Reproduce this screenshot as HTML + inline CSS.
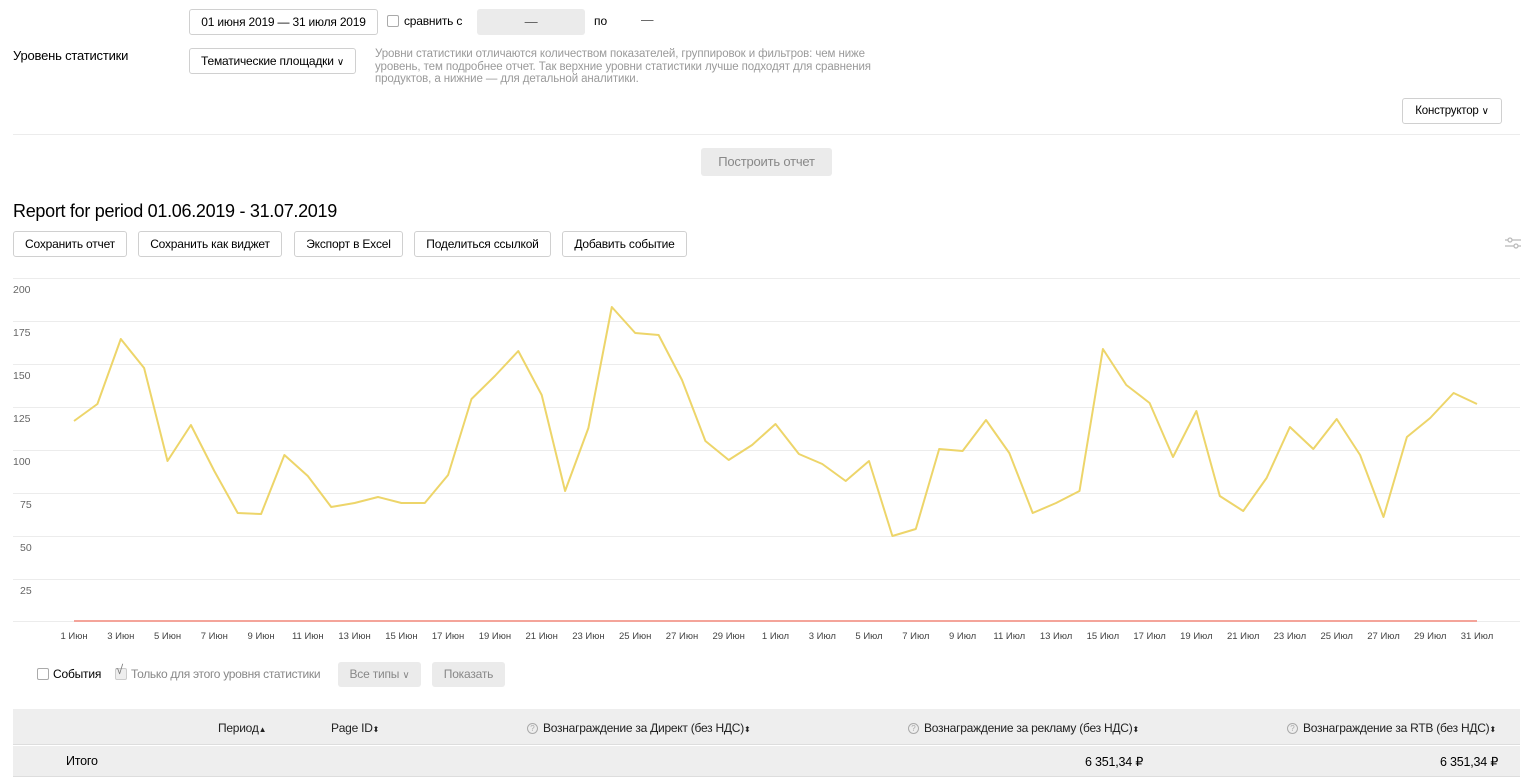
<!DOCTYPE html>
<html><head><meta charset="utf-8"><style>
*{box-sizing:border-box}
body{margin:0;width:1538px;height:779px;overflow:hidden;background:#fff;font-family:"Liberation Sans",sans-serif;font-size:13px;color:#000;position:relative}
.a{position:absolute}
.btn{position:absolute;border:1px solid #d0d0d0;border-radius:3px;background:#fff;height:26px;line-height:24px;font-size:12px;letter-spacing:-0.2px;white-space:nowrap;text-align:center}
.gbtn{position:absolute;background:#ebebeb;border-radius:3px;color:#888;text-align:center;letter-spacing:-0.2px}
.cb{position:absolute;width:12px;height:12px;border:1px solid #aaa;border-radius:2px;background:#fff}
.th{position:absolute;top:721px;font-size:12px;letter-spacing:-0.25px;color:#222}
.q{display:inline-block;width:11px;height:11px;border:1px solid #aaa;border-radius:50%;font-size:8px;line-height:9px;text-align:center;color:#aaa;margin-right:5px;vertical-align:1px;letter-spacing:0}
</style></head><body>
<div class="btn" style="left:189px;top:9px;width:189px">01 июня 2019 — 31 июля 2019</div>
<div class="cb" style="left:387px;top:15px"></div>
<div class="a" style="left:404px;top:14px;font-size:12px;letter-spacing:-0.2px">сравнить с</div>
<div class="gbtn" style="left:477px;top:9px;width:108px;height:26px;line-height:26px;color:#555">—</div>
<div class="a" style="left:594px;top:14px;font-size:12px">по</div>
<div class="a" style="left:641px;top:13px;font-size:12.5px;color:#555">—</div>
<div class="a" style="left:13px;top:48px;font-size:13px;letter-spacing:-0.2px">Уровень статистики</div>
<div class="btn" style="left:189px;top:48px;width:167px">Тематические площадки <span style="font-size:10px">&#8744;</span></div>
<div class="a" style="left:375px;top:48px;width:520px;font-size:11.5px;line-height:12.5px;color:#9a9a9a;letter-spacing:-0.1px">Уровни статистики отличаются количеством показателей, группировок и фильтров: чем ниже уровень, тем подробнее отчет. Так верхние уровни статистики лучше подходят для сравнения продуктов, а нижние — для детальной аналитики.</div>
<div class="btn" style="left:1402px;top:98px;width:100px;font-size:11.5px">Конструктор <span style="font-size:10px">&#8744;</span></div>
<div class="a" style="left:13px;top:134px;width:1507px;height:1px;background:#ececec"></div>
<div class="gbtn" style="left:701px;top:148px;width:131px;height:28px;line-height:28px;font-size:13px">Построить отчет</div>
<div class="a" style="left:13px;top:201px;font-size:18px;letter-spacing:-0.3px">Report for period 01.06.2019 - 31.07.2019</div>
<div class="btn" style="left:13px;top:231px;width:114px">Сохранить отчет</div>
<div class="btn" style="left:138px;top:231px;width:144px">Сохранить как виджет</div>
<div class="btn" style="left:294px;top:231px;width:109px">Экспорт в Excel</div>
<div class="btn" style="left:414px;top:231px;width:137px">Поделиться ссылкой</div>
<div class="btn" style="left:562px;top:231px;width:125px">Добавить событие</div>
<svg class="a" style="left:1505px;top:236px" width="16" height="14"><g stroke="#bbb" stroke-width="1.3" fill="none"><line x1="0" y1="4" x2="16" y2="4"/><line x1="0" y1="10" x2="16" y2="10"/><circle cx="5" cy="4" r="2" fill="#fff"/><circle cx="11" cy="10" r="2" fill="#fff"/></g></svg>
<svg class="a" style="left:0;top:270px" width="1538" height="380" font-family="Liberation Sans" font-size="10.5" fill="#666">
<g stroke="#ececec" stroke-width="1">
<line x1="13" y1="8.5" x2="1520" y2="8.5"/><line x1="13" y1="51.5" x2="1520" y2="51.5"/><line x1="13" y1="94.5" x2="1520" y2="94.5"/><line x1="13" y1="137.5" x2="1520" y2="137.5"/><line x1="13" y1="180.5" x2="1520" y2="180.5"/><line x1="13" y1="223.5" x2="1520" y2="223.5"/><line x1="13" y1="266.5" x2="1520" y2="266.5"/><line x1="13" y1="309.5" x2="1520" y2="309.5"/><line x1="13" y1="351.5" x2="1520" y2="351.5"/>
</g>
<g><text x="13" y="23">200</text><text x="13" y="66">175</text><text x="13" y="109">150</text><text x="13" y="152">125</text><text x="13" y="195">100</text><text x="20" y="238">75</text><text x="20" y="281">50</text><text x="20" y="324">25</text></g>
<line x1="74" y1="351" x2="1477" y2="351" stroke="#f4a49a" stroke-width="2"/>
<polyline fill="none" stroke="#edd56a" stroke-width="2" stroke-linejoin="round" points="
74,151 97.4,134 120.8,69 144.1,98 167.5,191 190.9,155 214.3,201 237.7,243 261.1,244 284.4,185 307.8,206 331.2,237 354.6,233 378,227 401.4,233 424.8,233 448.1,205 471.5,129 494.9,106 518.3,81 541.7,125 565.1,221 588.4,158 611.8,37 635.2,63 658.6,65 682,110 705.4,171 728.7,190 752.1,175 775.5,154 798.9,184 822.3,194 845.7,211 869,191 892.4,266 915.8,259 939.2,179 962.6,181 986,150 1009.3,183 1032.7,243 1056.1,233 1079.5,221 1102.9,79 1126.3,115 1149.6,133 1173,187 1196.4,141 1219.8,226 1243.2,241 1266.6,208 1289.9,157 1313.3,179 1336.7,149 1360.1,185 1383.5,247 1406.9,167 1430.2,148 1453.6,123 1477,134"/>
<g font-size="9.5" fill="#444" text-anchor="middle">
<text x="74" y="369">1 Июн</text><text x="120.8" y="369">3 Июн</text><text x="167.5" y="369">5 Июн</text><text x="214.3" y="369">7 Июн</text><text x="261.1" y="369">9 Июн</text><text x="307.8" y="369">11 Июн</text><text x="354.6" y="369">13 Июн</text><text x="401.4" y="369">15 Июн</text><text x="448.1" y="369">17 Июн</text><text x="494.9" y="369">19 Июн</text><text x="541.7" y="369">21 Июн</text><text x="588.4" y="369">23 Июн</text><text x="635.2" y="369">25 Июн</text><text x="682" y="369">27 Июн</text><text x="728.7" y="369">29 Июн</text><text x="775.5" y="369">1 Июл</text><text x="822.3" y="369">3 Июл</text><text x="869" y="369">5 Июл</text><text x="915.8" y="369">7 Июл</text><text x="962.6" y="369">9 Июл</text><text x="1009.3" y="369">11 Июл</text><text x="1056.1" y="369">13 Июл</text><text x="1102.9" y="369">15 Июл</text><text x="1149.6" y="369">17 Июл</text><text x="1196.4" y="369">19 Июл</text><text x="1243.2" y="369">21 Июл</text><text x="1289.9" y="369">23 Июл</text><text x="1336.7" y="369">25 Июл</text><text x="1383.5" y="369">27 Июл</text><text x="1430.2" y="369">29 Июл</text><text x="1477" y="369">31 Июл</text>
</g></svg>
<div class="cb" style="left:37px;top:668px"></div>
<div class="a" style="left:53px;top:667px;font-size:12px;letter-spacing:-0.2px">События</div>
<div class="cb" style="left:115px;top:668px;background:#eee;border-color:#ccc"></div>
<div class="a" style="left:116px;top:662px;font-size:13px;color:#777">√</div>
<div class="a" style="left:131px;top:667px;font-size:12px;letter-spacing:-0.3px;color:#888">Только для этого уровня статистики</div>
<div class="gbtn" style="left:338px;top:662px;width:83px;height:25px;line-height:25px;font-size:12px">Все типы <span style="font-size:10px">&#8744;</span></div>
<div class="gbtn" style="left:432px;top:662px;width:73px;height:25px;line-height:25px;font-size:12px">Показать</div>
<div class="a" style="left:13px;top:709px;width:1507px;height:36px;background:#eeeeee;border-bottom:1px solid #ddd"></div>
<div class="a" style="left:13px;top:746px;width:1507px;height:31px;background:#eeeeee;border-bottom:1px solid #ddd"></div>
<div class="a" style="left:1160px;top:777px;width:350px;height:2px;background:#fff"></div>
<div class="th" style="left:218px">Период<span style="font-size:8px">▲</span></div>
<div class="th" style="left:331px">Page ID<span style="font-size:8px">⬍</span></div>
<div class="th" style="left:527px"><span class="q">?</span>Вознаграждение за Директ (без НДС)<span style="font-size:8px">⬍</span></div>
<div class="th" style="left:908px"><span class="q">?</span>Вознаграждение за рекламу (без НДС)<span style="font-size:8px">⬍</span></div>
<div class="th" style="left:1287px"><span class="q">?</span>Вознаграждение за RTB (без НДС)<span style="font-size:8px">⬍</span></div>
<div class="a" style="left:66px;top:754px;font-size:12.5px;letter-spacing:-0.2px">Итого</div>
<div class="a" style="left:1085px;top:754px;font-size:12.5px;letter-spacing:-0.2px">6 351,34 ₽</div>
<div class="a" style="left:1440px;top:754px;font-size:12.5px;letter-spacing:-0.2px">6 351,34 ₽</div>
</body></html>
